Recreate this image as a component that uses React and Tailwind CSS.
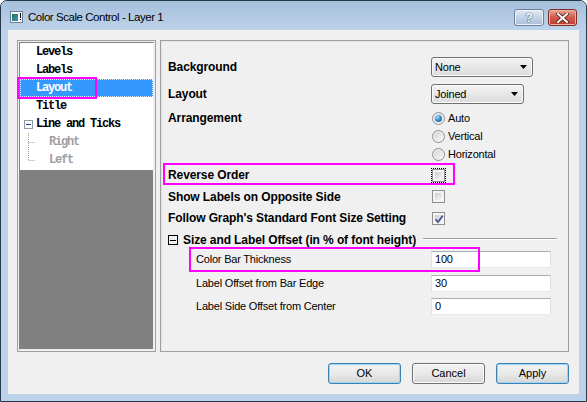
import React from "react";

function Radio({ checked }) {
  return (
    <span className="w-[13px] h-[13px] rounded-full border border-[#8e8f8f] bg-linear-to-br from-[#cfd2d7] to-[#fafafa] shadow-[inset_0_0_0_1px_#f2f2f2] flex items-center justify-center shrink-0">
      {checked ? (
        <span className="w-[7px] h-[7px] rounded-full bg-[radial-gradient(circle_at_35%_30%,#a6dcfa,#2a84c8_55%,#0f4f8a)]" />
      ) : null}
    </span>
  );
}

function Check({ checked, focus }) {
  return (
    <span className="relative w-[13px] h-[13px] border border-[#8e8f8f] bg-[#f4f4f4] p-[2px] flex shrink-0">
      <span className="flex-1 bg-linear-to-br from-[#c9cdd3] to-[#f7f7f7]" />
      {checked ? (
        <svg className="absolute left-[1px] top-[1px]" width="10" height="10" viewBox="0 0 10 10">
          <path d="M1.5 5.2 L4 8 L8.8 1.6" fill="none" stroke="#4a5d8e" strokeWidth="1.8" />
        </svg>
      ) : null}
      {focus ? <span className="absolute -inset-[2px] border border-dotted border-black" /> : null}
    </span>
  );
}

function Dropdown({ label, width }) {
  return (
    <div
      className={
        width === "wide"
          ? "w-[102px] h-[20px] flex items-center justify-between rounded-[3px] border border-[#707070] bg-linear-to-b from-[#f3f3f3] to-[#dcdcdc] shadow-[inset_0_0_0_1px_#fbfbfb] pl-[3px] pr-[5px] text-[11px] tracking-[-0.2px]"
          : "w-[93px] h-[20px] flex items-center justify-between rounded-[3px] border border-[#707070] bg-linear-to-b from-[#f3f3f3] to-[#dcdcdc] shadow-[inset_0_0_0_1px_#fbfbfb] pl-[3px] pr-[5px] text-[11px] tracking-[-0.2px]"
      }
    >
      <span>{label}</span>
      <svg width="7" height="4" viewBox="0 0 7 4">
        <path d="M0 0H7L3.5 4Z" fill="#000" />
      </svg>
    </div>
  );
}

function Input({ value }) {
  return (
    <div className="w-[120px] h-[17px] bg-white border border-[#abadb3] border-r-[#dbdfe6] border-b-[#e3e9ef] border-l-[#e2e3ea] flex items-center pl-[3px] text-[11px] tracking-[-0.2px]">
      {value}
    </div>
  );
}

function Btn({ label, def }) {
  return (
    <div
      className={
        def
          ? "w-[73px] h-[21px] rounded-[3px] border border-[#3c7fb1] bg-linear-to-b from-[#f2f2f2] via-[#e9e9e9] to-[#d6d6d6] shadow-[inset_0_0_0_1px_#9ad8f7] flex items-center justify-center text-[11px]"
          : "w-[73px] h-[21px] rounded-[3px] border border-[#707070] bg-linear-to-b from-[#f2f2f2] via-[#e9e9e9] to-[#d6d6d6] shadow-[inset_0_0_0_1px_#fbfbfb] flex items-center justify-center text-[11px]"
      }
    >
      {label}
    </div>
  );
}

function Connector({ last }) {
  return (
    <svg width="29" height="18" viewBox="0 0 29 18" className="shrink-0">
      <path
        d={last ? "M8.5 0V9M8.5 9.5H15" : "M8.5 0V18M8.5 9.5H15"}
        stroke="#a0a0a0"
        strokeWidth="1"
        strokeDasharray="1 1"
        fill="none"
      />
    </svg>
  );
}

export default function App() {
  return (
    <div className="w-[587px] h-[402px] overflow-hidden bg-white">
      <div className="w-[587px] h-[402px] flex flex-col rounded-t-[7px] border border-[#26374a] bg-[#bcd2ea] font-['Liberation_Sans',Arial,sans-serif] text-black">
        {/* title bar */}
        <div className="h-[29px] shrink-0 flex items-center pl-[9px] pr-[9px] rounded-t-[6px] bg-linear-to-b from-[#a6bfdb] to-[#bdd3eb]">
          <svg width="13" height="12" viewBox="0 0 13 12" className="mt-[3px]">
            <rect x="0.5" y="0.5" width="12" height="11" fill="#f4f7fa" stroke="#6f8396" />
            <rect x="2" y="3" width="6" height="7" fill="url(#g1)" />
            <rect x="10" y="2" width="1" height="5" fill="#111" />
            <rect x="10" y="8" width="1" height="1" fill="#111" />
            <defs>
              <linearGradient id="g1" x1="0" y1="0" x2="1" y2="1">
                <stop offset="0" stopColor="#1f7a4a" />
                <stop offset="1" stopColor="#4a8fc4" />
              </linearGradient>
            </defs>
          </svg>
          <span className="ml-[5px] mt-[4px] text-[11.5px] tracking-[-0.45px] text-[#000]">Color Scale Control - Layer 1</span>
          <div className="ml-auto mt-[4px] flex gap-[4px]">
            <div className="w-[30px] h-[17px] rounded-[3px] border border-[#6a7f98] bg-linear-to-b from-[#e3ecf6] via-[#c2d3e6] to-[#a9bfd8] shadow-[inset_0_0_0_1px_#eef4fa] flex items-center justify-center">
              <span className="text-[13px] font-bold leading-none text-white [text-shadow:0_0_1px_#2b3a4a,0_0_1px_#2b3a4a]">?</span>
            </div>
            <div className="w-[29px] h-[17px] rounded-[3px] border border-[#7d2b24] bg-linear-to-b from-[#e9a597] via-[#cf5a4c] to-[#c03a2d] shadow-[inset_0_0_0_1px_#eeb3a8] flex items-center justify-center">
              <svg width="13" height="10" viewBox="0 0 13 10">
                <path d="M2 1L11 9M11 1L2 9" stroke="#5a1d17" strokeWidth="3.6" strokeLinecap="square" />
                <path d="M2 1L11 9M11 1L2 9" stroke="#ffffff" strokeWidth="2" strokeLinecap="square" />
              </svg>
            </div>
          </div>
        </div>

        {/* frame + client */}
        <div className="flex-1 flex px-[7px] pb-[7px]">
          <div className="flex-1 flex flex-col bg-[#f0f0f0] pt-[10px] pl-[9px]">
            <div className="flex gap-[4px]">
              {/* tree */}
              <div className="relative w-[139px] h-[312px] border border-[#a0a0a0] p-px bg-[#f0f0f0]">
                <div className="h-full flex flex-col border border-[#828282] border-r-[#f0f0f0] border-b-[#f0f0f0] bg-white font-mono font-bold text-[12px] tracking-[-1.2px] leading-none">
                  <div className="h-[18px] shrink-0 flex items-center pl-[16px]">Levels</div>
                  <div className="h-[18px] shrink-0 flex items-center pl-[16px]">Labels</div>
                  <div className="h-[18px] shrink-0 flex items-center pl-[15px] bg-[#3399ff] text-white border border-dotted border-[#d7eaff]">Layout</div>
                  <div className="h-[18px] shrink-0 flex items-center pl-[16px]">Title</div>
                  <div className="h-[18px] shrink-0 flex items-center pl-[4px]">
                    <span className="w-[9px] h-[9px] border border-[#8c9bb0] bg-white flex items-center justify-center">
                      <span className="w-[5px] h-px bg-[#1a3c8c]" />
                    </span>
                    <span className="ml-[3px]">Line and Ticks</span>
                  </div>
                  <div className="h-[18px] shrink-0 flex items-center text-[#a0a0a0]">
                    <Connector last={false} />
                    <span>Right</span>
                  </div>
                  <div className="h-[18px] shrink-0 flex items-center text-[#a0a0a0]">
                    <Connector last={true} />
                    <span>Left</span>
                  </div>
                  <div className="flex-1 bg-[#808080] mt-px" />
                </div>
                <div className="absolute left-[-1px] top-[36px] w-[80px] h-[22px] border-2 border-[#ff00ff]" />
              </div>

              {/* right panel */}
              <div className="w-[409px] h-[312px] border border-[#a0a0a0] shadow-[inset_1px_1px_0_#e3e3e3]">
                <div className="pl-[7px] pt-[16px] flex flex-col text-[12px] tracking-[-0.1px]">
                  <div className="h-[20px] flex items-center">
                    <span className="w-[263px] font-bold">Background</span>
                    <Dropdown label="None" width="wide" />
                  </div>
                  <div className="h-[20px] mt-[7px] flex items-center">
                    <span className="w-[263px] font-bold">Layout</span>
                    <Dropdown label="Joined" width="narrow" />
                  </div>
                  <div className="mt-[5px] flex">
                    <span className="w-[263px] h-[18px] flex items-center font-bold">Arrangement</span>
                    <div className="flex flex-col pl-[1px] text-[11px] tracking-[-0.2px]">
                      <div className="h-[18px] flex items-center gap-[3px]">
                        <Radio checked={true} />
                        <span>Auto</span>
                      </div>
                      <div className="h-[18px] flex items-center gap-[3px]">
                        <Radio checked={false} />
                        <span>Vertical</span>
                      </div>
                      <div className="h-[18px] flex items-center gap-[3px]">
                        <Radio checked={false} />
                        <span>Horizontal</span>
                      </div>
                    </div>
                  </div>
                  <div className="relative h-[23px] flex items-center pt-px">
                    <span className="w-[264px] font-bold">Reverse Order</span>
                    <Check checked={false} focus={true} />
                    <div className="absolute left-[-5px] top-0 w-[292px] h-[22px] border-2 border-[#ff00ff]" />
                  </div>
                  <div className="h-[21px] flex items-center">
                    <span className="w-[264px] font-bold">Show Labels on Opposite Side</span>
                    <Check checked={false} focus={false} />
                  </div>
                  <div className="h-[22px] flex items-center">
                    <span className="w-[264px] font-bold">Follow Graph's Standard Font Size Setting</span>
                    <Check checked={true} focus={false} />
                  </div>
                  <div className="h-[22px] flex items-center pr-[11px]">
                    <span className="w-[10px] h-[10px] border border-black flex items-center justify-center shrink-0">
                      <span className="w-[6px] h-px bg-black" />
                    </span>
                    <span className="ml-[5px] font-bold whitespace-nowrap">Size and Label Offset (in % of font height)</span>
                    <span className="flex-1 ml-[7px] mt-[-2px] h-[2px] border-t border-[#a0a0a0] border-b border-b-white" />
                  </div>
                  <div className="relative h-[17px] flex items-center text-[11px] tracking-[-0.2px]">
                    <span className="w-[263px] pl-[28px]">Color Bar Thickness</span>
                    <Input value="100" />
                    <div className="absolute left-[21px] top-[-4px] w-[291px] h-[25px] border-2 border-[#ff00ff]" />
                  </div>
                  <div className="h-[17px] mt-[7px] flex items-center text-[11px] tracking-[-0.2px]">
                    <span className="w-[263px] pl-[28px]">Label Offset from Bar Edge</span>
                    <Input value="30" />
                  </div>
                  <div className="h-[17px] mt-[6px] flex items-center text-[11px] tracking-[-0.2px]">
                    <span className="w-[263px] pl-[28px]">Label Side Offset from Center</span>
                    <Input value="0" />
                  </div>
                </div>
              </div>
            </div>

            {/* buttons */}
            <div className="mt-[11px] flex justify-end gap-[11px] pr-[10px]">
              <Btn label="OK" def={true} />
              <Btn label="Cancel" def={false} />
              <Btn label="Apply" def={true} />
            </div>
          </div>
        </div>
      </div>
    </div>
  );
}
